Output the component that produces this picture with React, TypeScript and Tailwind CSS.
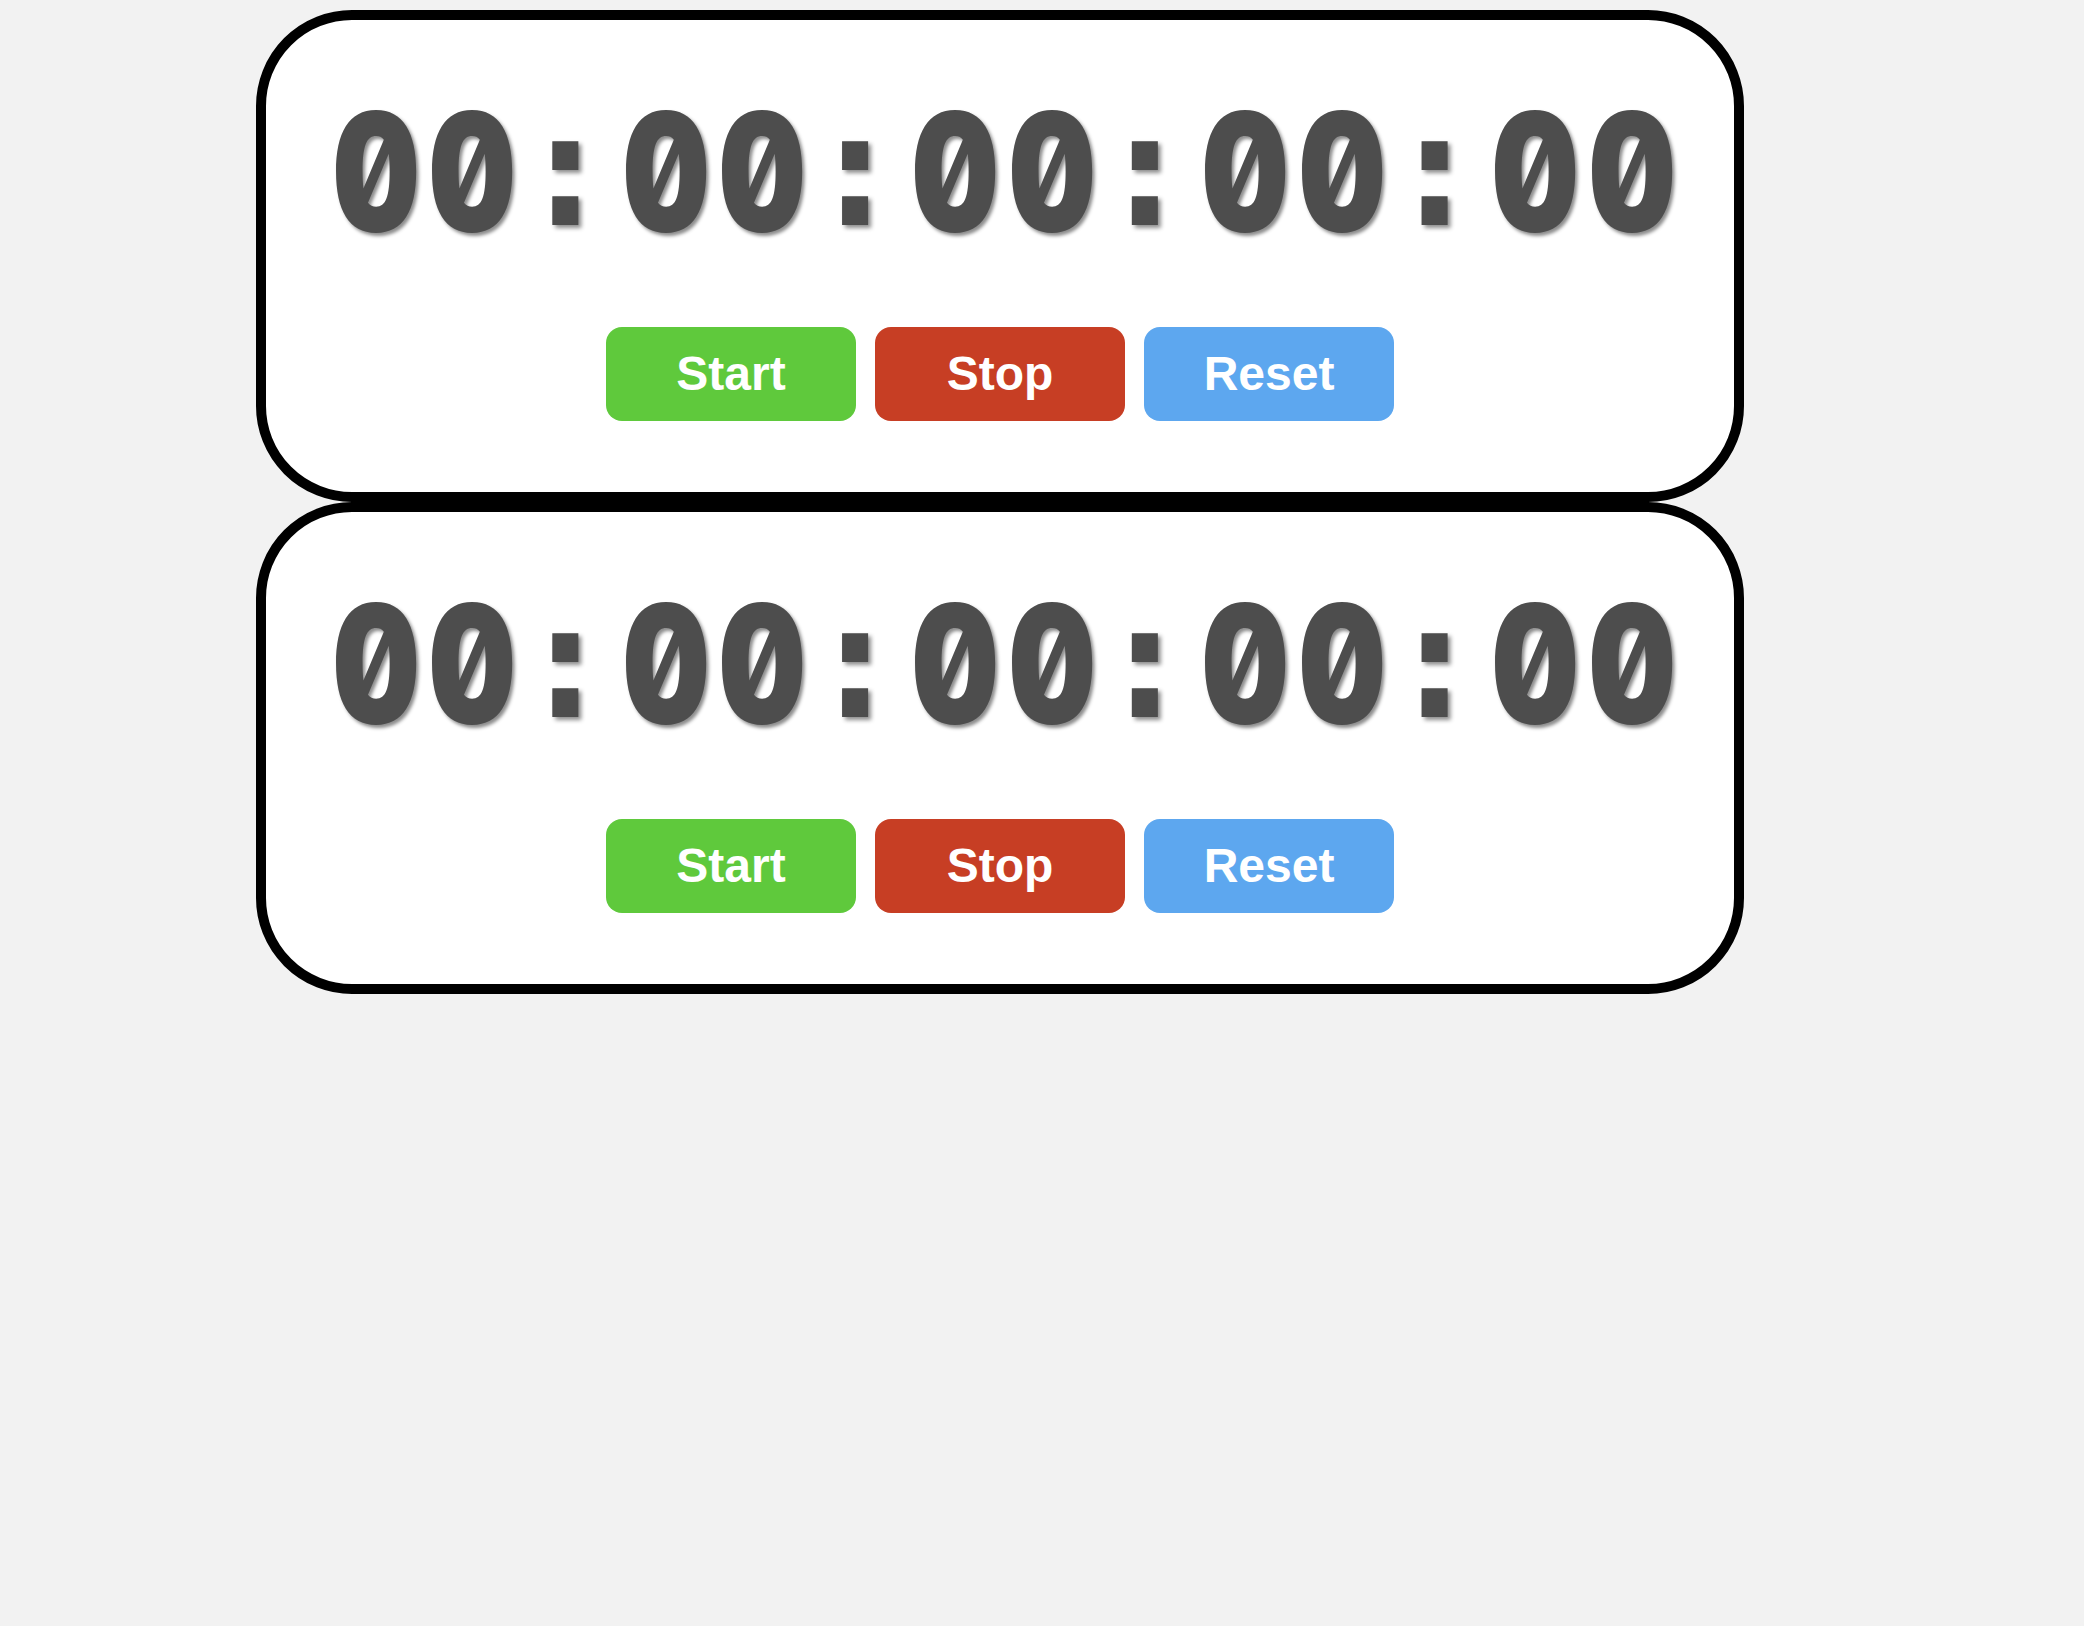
import React from "react";

const buttons = [
  { label: "Start", color: "bg-[#5fc93c]" },
  { label: "Stop", color: "bg-[#c73e24]" },
  { label: "Reset", color: "bg-[#5da7ef]" },
];

const TIME = "00:00:00:00:00";

const Stopwatch = () => {
  return (
    <div className="w-[1488px] ml-[256px] h-[492px] bg-white border-[10px] border-black rounded-[96px] flex flex-col items-center pt-[70px]">
      {/* Time display: each character in a fixed monospace cell */}
      <div className="flex text-[164px] leading-none font-bold text-[#4d4d4d] whitespace-nowrap [text-shadow:3px_3px_4px_rgba(0,0,0,0.45)]">
        {TIME.split("").map((ch, i) =>
          ch === ":" ? (
            <span key={i} className="w-[96.6px] text-center text-[160px] [font-family:'DejaVu_Sans_Mono',monospace]">
              :
            </span>
          ) : (
            <span key={i} className="w-[96.6px] text-center font-black slashed-zero tabular-nums scale-x-[0.82] [font-family:Inter,sans-serif]">
              {ch}
            </span>
          )
        )}
      </div>

      {/* Controls */}
      <div className="flex gap-[19px] mt-[73px]">
        {buttons.map((b) => (
          <button
            key={b.label}
            className={`${b.color} w-[250px] h-[94px] rounded-[16px] text-white font-bold text-[48px] [font-family:'Liberation_Sans',Arial,sans-serif]`}
          >
            {b.label}
          </button>
        ))}
      </div>
    </div>
  );
};

export default function App() {
  return (
    <div className="min-h-[1626px] bg-[#f2f2f2] pt-[10px]">
      <Stopwatch />
      <Stopwatch />
    </div>
  );
}
